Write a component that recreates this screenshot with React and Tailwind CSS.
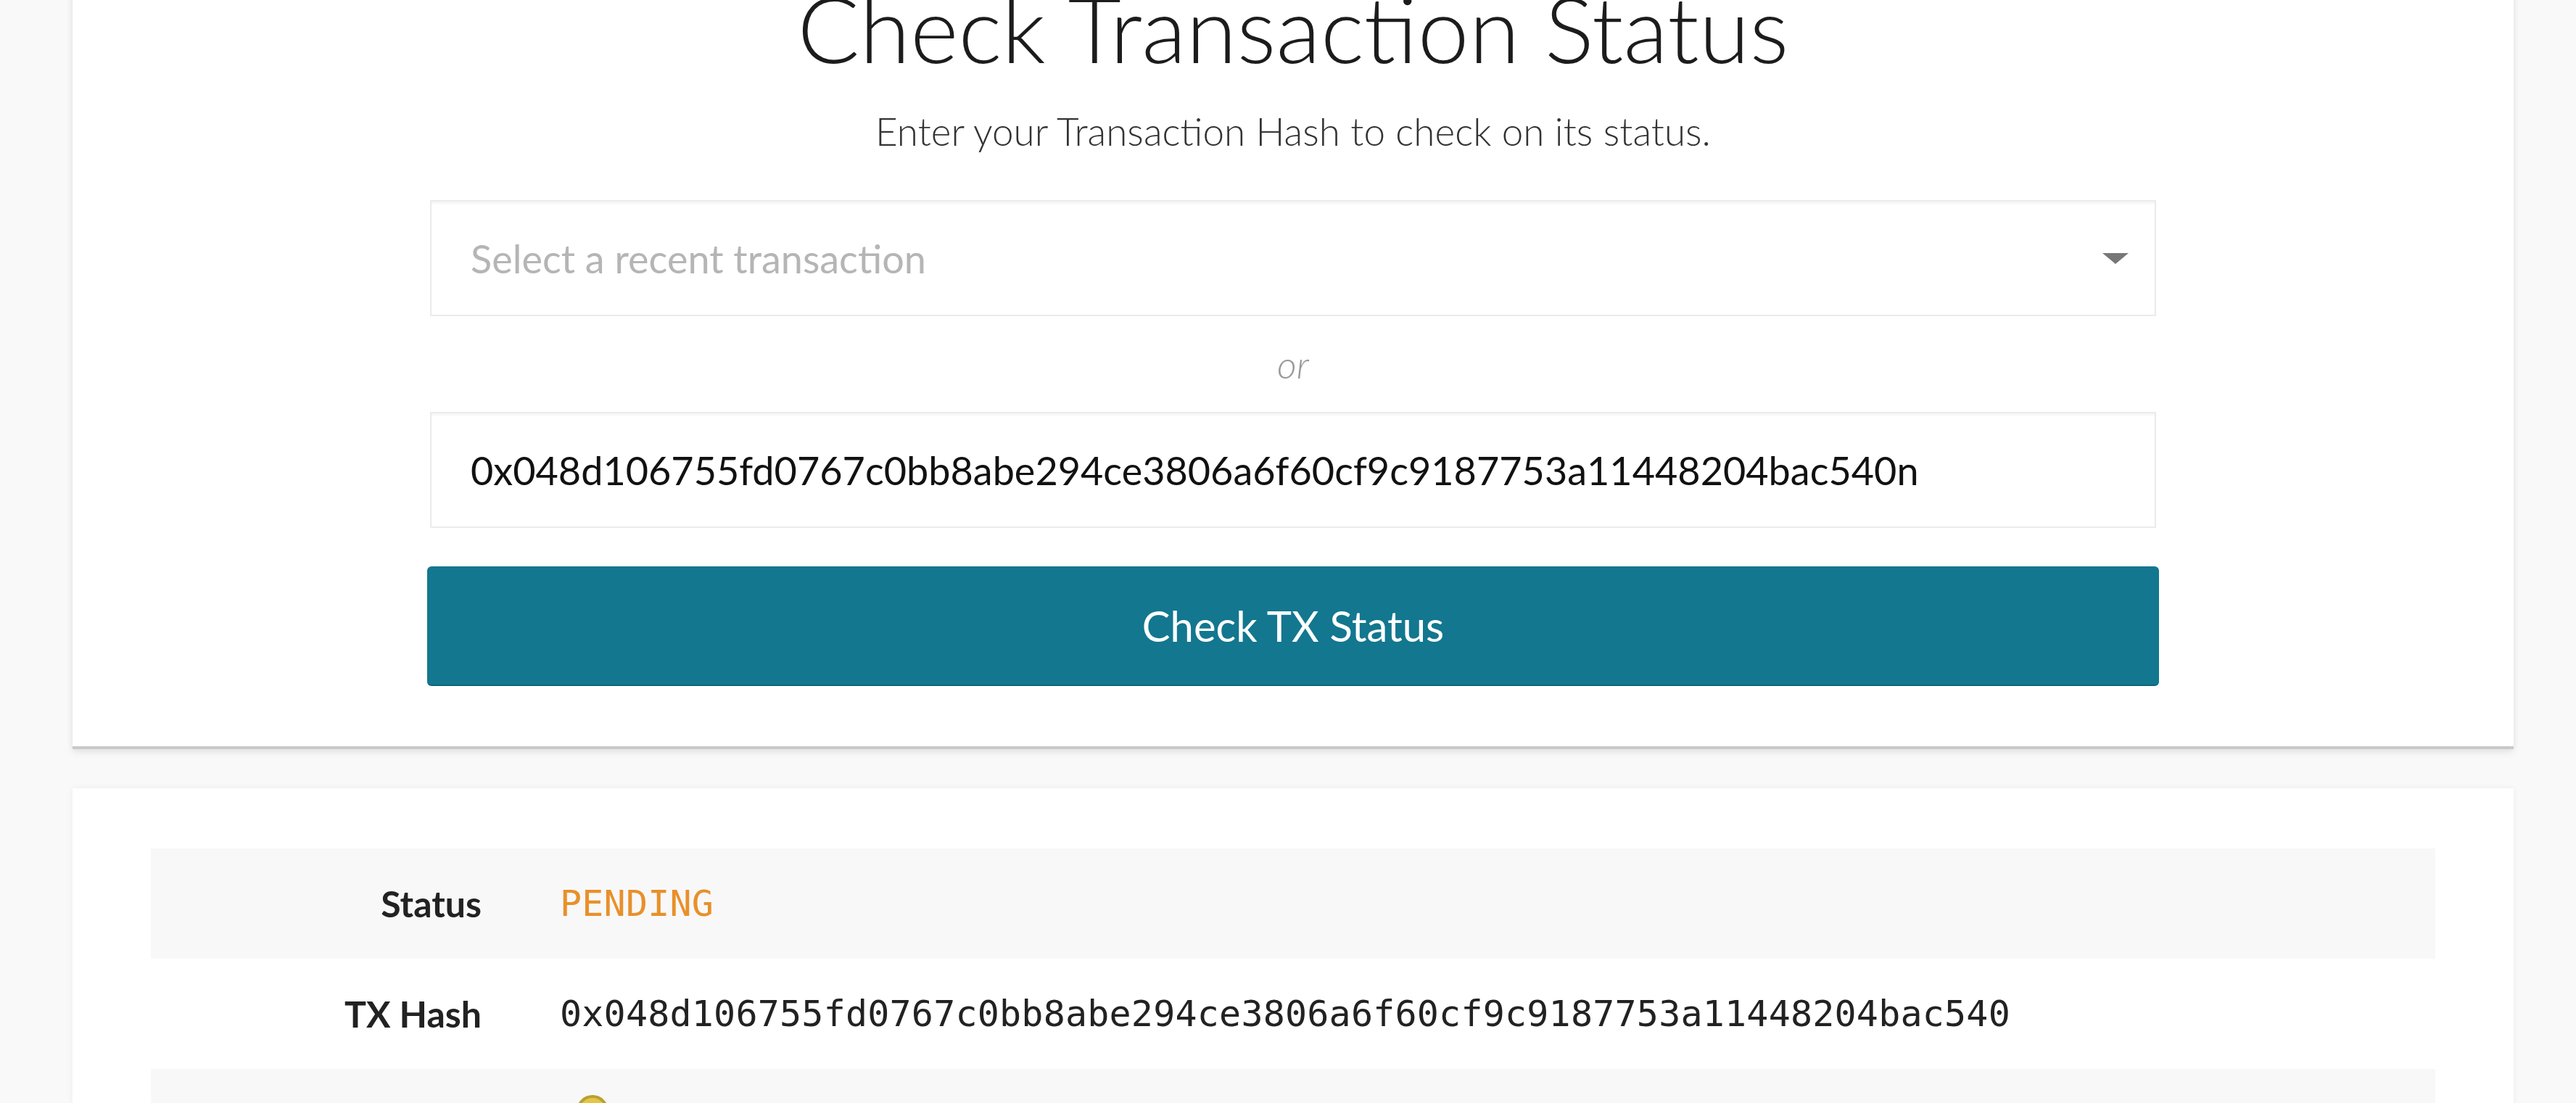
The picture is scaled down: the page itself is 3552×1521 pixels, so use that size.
import React from "react";

const HASH = "0x048d106755fd0767c0bb8abe294ce3806a6f60cf9c9187753a11448204bac540";

function Row({ label, shaded, children }) {
  return (
    <div className={`flex items-center h-[152px] ${shaded ? "bg-[#f8f8f8]" : "bg-white"}`}>
      <div className="w-[456px] shrink-0 text-right text-[50px] font-bold text-[#222]">{label}</div>
      <div className="pl-[108px] text-[50px] font-['DejaVu_Sans_Mono',monospace] tracking-[0.2px]">{children}</div>
    </div>
  );
}

export default function App() {
  return (
    <div className="min-h-screen h-[1521px] overflow-hidden bg-[#f9f9f9] font-['Lato','Open_Sans',sans-serif]">
      <div className="ml-[100px] w-[3366px] bg-white border-b-4 border-[#c9c9c9] shadow-[0_0_8px_rgba(0,0,0,0.07),0_6px_10px_rgba(0,0,0,0.06)] pb-[83px]">
        <h1 className="text-center text-[127px] leading-none font-light text-[#1c1c1c] -mt-[25px]">Check Transaction Status</h1>
        <p className="text-center text-[53px] font-light text-[#333] mt-[52px] leading-none">
          Enter your Transaction Hash to check on its status.
        </p>
        <div className="w-[2380px] mx-auto mt-[69px] flex flex-col">
          <div className="h-[160px] flex items-center justify-between pl-[54px] pr-[36px] border-2 border-[#ebebeb] shadow-[inset_0_3px_3px_rgba(0,0,0,0.04)] bg-white">
            <span className="text-[54px] text-[#b5b5b5]">Select a recent transaction</span>
            <svg width="36" height="15" viewBox="0 0 36 15">
              <path d="M0 0 H36 L18 15 Z" fill="#777" />
            </svg>
          </div>
          <div className="h-[132px] flex items-center justify-center text-[52px] italic font-light text-[#999]">or</div>
          <div className="h-[160px] flex items-center pl-[54px] border-2 border-[#ebebeb] shadow-[inset_0_3px_3px_rgba(0,0,0,0.04)] bg-white">
            <span className="text-[54px] text-[#111]">{HASH}n</span>
          </div>
          <button className="mt-[53px] -mx-[4px] h-[165px] rounded-[6px] bg-[#12778f] border-b-2 border-[#0c6478] text-white text-[58px]">
            Check TX Status
          </button>
        </div>
      </div>
      <div className="mt-[54px] ml-[100px] w-[3366px] bg-white shadow-[0_0_8px_rgba(0,0,0,0.06)] pt-[83px] px-[108px]">
        <Row label="Status" shaded>
          <span className="text-[#e8902a]">PENDING</span>
        </Row>
        <Row label="TX Hash">
          <span className="text-[#222]">{HASH}</span>
        </Row>
        <div className="flex h-[152px] bg-[#f8f8f8] pt-[36px]">
          <div className="w-[456px] shrink-0" />
          <div className="pl-[131px]">
            <div className="w-[44px] h-[44px] rounded-full bg-[#e4c545] border-4 border-[#b8a132]" />
          </div>
        </div>
      </div>
    </div>
  );
}
